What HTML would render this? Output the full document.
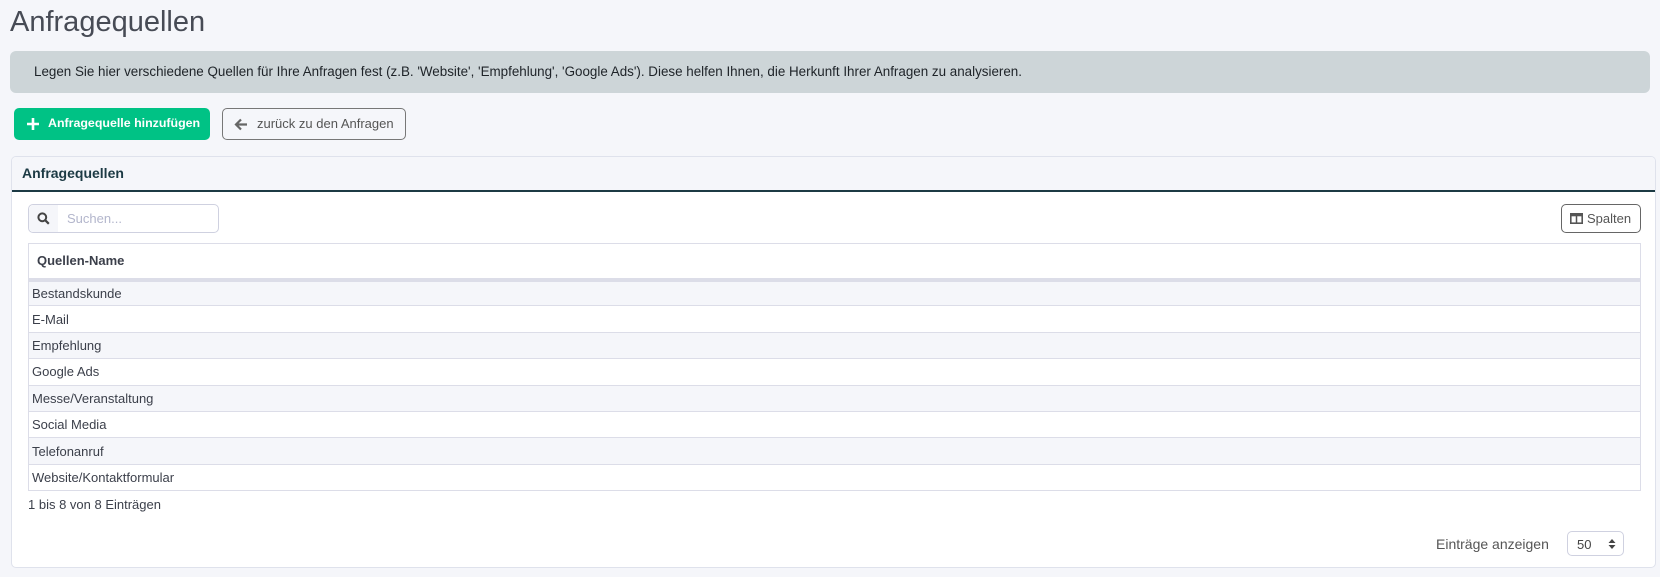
<!DOCTYPE html>
<html><head><meta charset="utf-8"><style>
*{box-sizing:border-box;margin:0;padding:0}
body{width:1660px;height:577px;background:#f5f6fa;font-family:"Liberation Sans",sans-serif;color:#3b3f4a;position:relative;overflow:hidden}
.abs{position:absolute}
h1{position:absolute;left:10px;top:6px;font-size:29px;font-weight:400;color:#474b55}
.alert{left:10px;top:51px;width:1640px;height:42px;background:#cdd5d8;border-radius:6px;font-size:13.4px;color:#1e2328;padding:0 0 0 24px;line-height:42px;white-space:nowrap}
.btn{top:108px;height:32px;border-radius:5px;font-size:13px;line-height:30px;white-space:nowrap}
.green{left:14px;width:196px;background:#00c285;color:#fff;font-weight:700;font-size:12.4px;padding-left:34px}
.back{left:222px;width:184px;border:1px solid #777;color:#555;padding-left:34px;background:#f5f6fa}
.card{left:11px;top:156px;width:1645px;height:412px;background:#fff;border:1px solid #dfe2ec;border-radius:5px;overflow:hidden}
.ch{height:35px;background:#f5f6fa;border-bottom:2px solid #1c3a44;font-weight:700;font-size:14px;color:#1c3a44;padding:8px 0 0 10px}
.search{left:16px;top:47px;width:191px;height:29px;border:1px solid #cfd1e0;border-radius:5px;background:#fff}
.search .ic{position:absolute;left:0;top:0;width:29px;height:27px;background:#f5f6fa;border-radius:5px 0 0 5px}
.search span{position:absolute;left:38px;top:6px;font-size:13px;color:#b3b6cc}
.spal{left:1549px;top:47px;width:80px;height:29px;border:1px solid #666;border-radius:5px;font-size:13px;color:#555;line-height:27px;padding-left:25px}
table{position:absolute;left:16px;top:86px;width:1613px;border-collapse:collapse;border:1px solid #dcdde8;font-size:13px}
th{height:36px;text-align:left;padding-left:8px;font-weight:700;border-bottom:4px solid #dcdde8;color:#3b3f4a}
td{height:26.4px;padding-left:3px;border-top:1px solid #dcdde8;color:#3b3f4a}
tr.o td{background:#f5f6fa}
.info{left:16px;top:340px;font-size:13px}
.len{left:1424px;top:379px;font-size:14px;color:#555}
.sel{left:1555px;top:374px;width:57px;height:25px;border:1px solid #cfd1e0;border-radius:5px;font-size:13px;color:#444;padding:5px 0 0 9px}
</style></head><body>
<h1>Anfragequellen</h1>
<div class="abs alert">Legen Sie hier verschiedene Quellen für Ihre Anfragen fest (z.B. 'Website', 'Empfehlung', 'Google Ads'). Diese helfen Ihnen, die Herkunft Ihrer Anfragen zu analysieren.</div>
<div class="abs btn green"><svg class="abs" style="left:12px;top:9px" width="14" height="14" viewBox="0 0 14 14"><path d="M7 1v12M1 7h12" stroke="#fff" stroke-width="2.6"/></svg>Anfragequelle hinzufügen</div>
<div class="abs btn back"><svg class="abs" style="left:11px;top:9px" width="14" height="13" viewBox="0 0 14 13"><path d="M13 6.5H2M7 1.5L2 6.5l5 5" stroke="#666" stroke-width="2.2" fill="none"/></svg>zurück zu den Anfragen</div>
<div class="abs card">
<div class="ch">Anfragequellen</div>
<div class="abs search"><div class="ic"><svg class="abs" style="left:8px;top:7px" width="13" height="13" viewBox="0 0 13 13"><circle cx="5.3" cy="5.3" r="3.9" stroke="#444" stroke-width="2" fill="none"/><path d="M8.2 8.2l3.6 3.6" stroke="#444" stroke-width="2.2"/></svg></div><span>Suchen...</span></div>
<div class="abs spal"><svg class="abs" style="left:8px;top:8px" width="13" height="11" viewBox="0 0 13 11"><rect x="0.8" y="0.8" width="11.4" height="9.4" fill="none" stroke="#555" stroke-width="1.6"/><rect x="0.8" y="0.8" width="11.4" height="2.5" fill="#555"/><path d="M6.5 1v9" stroke="#555" stroke-width="1.5"/></svg>Spalten</div>
<table>
<tr><th>Quellen-Name</th></tr>
<tr class="o"><td>Bestandskunde</td></tr>
<tr><td>E-Mail</td></tr>
<tr class="o"><td>Empfehlung</td></tr>
<tr><td>Google Ads</td></tr>
<tr class="o"><td>Messe/Veranstaltung</td></tr>
<tr><td>Social Media</td></tr>
<tr class="o"><td>Telefonanruf</td></tr>
<tr><td>Website/Kontaktformular</td></tr>
</table>
<div class="abs info">1 bis 8 von 8 Einträgen</div>
<div class="abs len">Einträge anzeigen</div>
<div class="abs sel">50<svg class="abs" style="left:40px;top:6px" width="8" height="12" viewBox="0 0 8 12"><path d="M4 1L7.5 5h-7zM4 11L7.5 7h-7z" fill="#444"/></svg></div>
</div>
</body></html>
